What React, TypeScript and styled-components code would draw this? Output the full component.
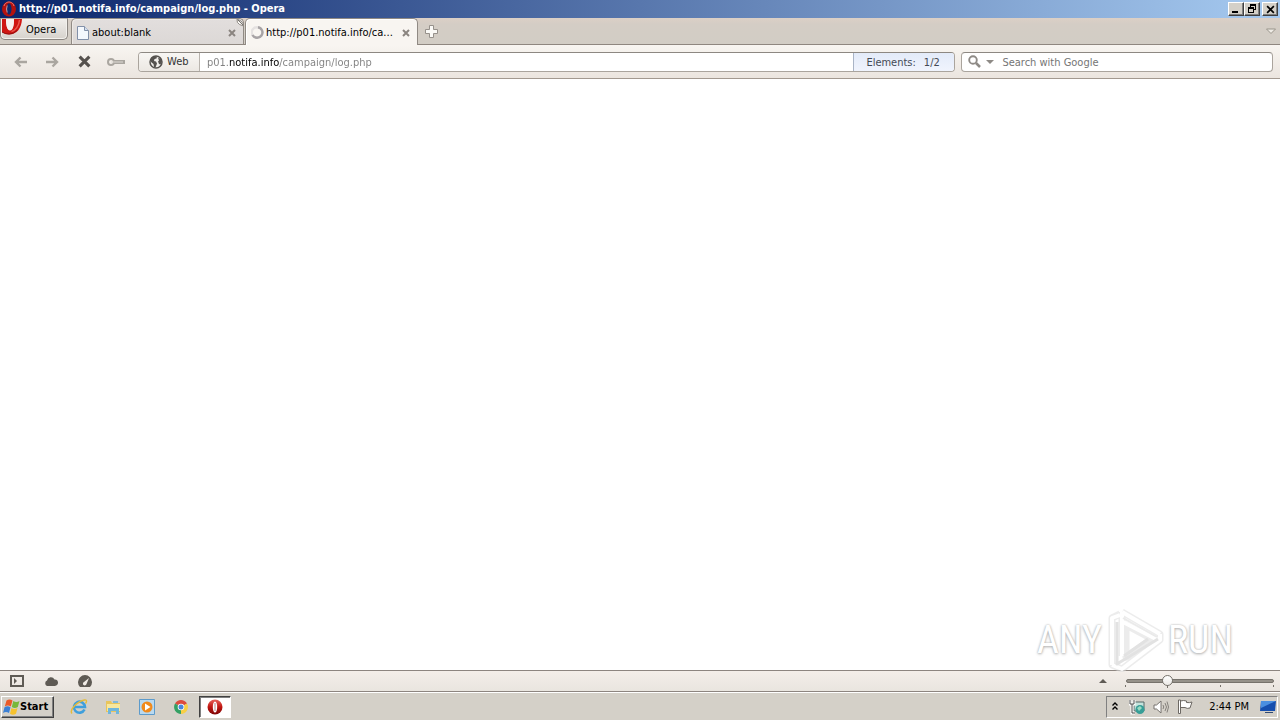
import React from "react";
import styled, { createGlobalStyle, css } from "styled-components";

const Global = createGlobalStyle`
  * { box-sizing: border-box; }
  body { margin: 0; background: #fff; }
  body, button, input {
    font-family: Tahoma, "DejaVu Sans Condensed", "Noto Sans", sans-serif;
    font-size: 11px;
    line-height: 14px;
    color: #000;
  }
  button { padding: 0; border: 0; background: none; }
  svg { display: block; flex: none; }
`;

const Desktop = styled.div`
  display: flex;
  flex-direction: column;
  min-height: 100vh;
`;

const TitleBar = styled.header`
  display: flex;
  align-items: center;
  gap: 2px;
  height: 18px;
  padding: 0 2px 0 1px;
  background: linear-gradient(90deg, #0a246a, #a6caf0);
`;

const Title = styled.h1`
  flex: 1;
  margin: 0;
  font-size: 11px;
  line-height: 18px;
  font-weight: 700;
  color: #fff;
`;

const raised = css`
  border: 1px solid;
  border-color: #fff #404040 #404040 #fff;
  box-shadow: inset -1px -1px 0 #808080;
  background: #d4d0c8;
`;

const WindowButtons = styled.div`
  display: flex;
`;

const WindowButton = styled.button<{ $apart?: boolean }>`
  ${raised}
  display: grid;
  place-items: center;
  width: 16px;
  height: 14px;
  margin-left: ${(p) => (p.$apart ? 2 : 0)}px;
`;

const TabBar = styled.nav`
  display: flex;
  height: 27px;
  padding-right: 4px;
  background: linear-gradient(#dcd0c6, #d4cdc5 6px, #d2cdc5);
  border-bottom: 1px solid #8f8780;
`;

const OperaButton = styled.button`
  display: flex;
  align-items: flex-start;
  gap: 4px;
  width: 68px;
  height: 22px;
  margin-right: 3px;
  padding-left: 1px;
  border: 1px solid #8c8782;
  border-top-color: #b5aea6;
  border-radius: 0 0 5px 5px;
  background: linear-gradient(#f0eeeb, #d6d2cc);
  box-shadow: inset 0 0 0 1px #f3f1ed;
  line-height: 22px;
`;

const Tab = styled.div<{ $active?: boolean }>`
  position: relative;
  display: flex;
  align-items: center;
  width: 173px;
  height: ${(p) => (p.$active ? 27 : 26)}px;
  margin-right: 1px;
  padding: 2px 6px 0 5px;
  border: 1px solid #908a84;
  border-bottom: 0;
  border-radius: 5px 5px 0 0;
  background: ${(p) => (p.$active ? "#f8f5f1" : "linear-gradient(#e2dedd, #dcd8d6)")};
  box-shadow: inset 1px 1px 0 ${(p) => (p.$active ? "#fff" : "#eeeae6")};
`;

const TabLabel = styled.button`
  display: flex;
  flex: 1;
  align-items: center;
  gap: 2px;
  min-width: 0;
  white-space: nowrap;
`;

const TabText = styled.span`
  flex: 1;
  overflow: hidden;
  text-align: left;
`;

const Corner = styled.span`
  position: absolute;
  top: 0;
  right: -1px;
`;

const IconButton = styled.button<{ $width?: number }>`
  display: grid;
  place-items: center;
  width: ${(p) => p.$width ?? 16}px;
`;

const Fill = styled.span`
  flex: 1;
`;

const Toolbar = styled.div`
  display: flex;
  align-items: center;
  gap: 6px;
  height: 34px;
  padding: 0 7px 0 5px;
  border-bottom: 1px solid #a39990;
  background: linear-gradient(#f8f5f1, #ebe5df);
`;

const NavButtons = styled.div`
  display: flex;
  width: 127px;
`;

const Field = styled.div<{ $grow: number }>`
  display: flex;
  align-items: center;
  flex: ${(p) => p.$grow} 1 0;
  min-width: 0;
  height: 20px;
  overflow: hidden;
  border: 1px solid #aaa49d;
  border-top-color: #8d8882;
  border-radius: 4px;
  background: #fff;
`;

const WebBadge = styled.button`
  display: flex;
  align-items: center;
  gap: 4px;
  width: 61px;
  height: 18px;
  padding: 1px 0 0 10px;
  border-right: 1px solid #b9b4ae;
  background: linear-gradient(#f8f6f3, #ece8e3);
  color: #333;
`;

const TextInput = styled.input`
  flex: 1;
  min-width: 0;
  height: 18px;
  padding: 1px 8px 0;
  border: 0;
  outline: 0;
  background: none;
  &::placeholder { color: #757575; opacity: 1; }
`;

const AddressInput = styled(TextInput)`
  padding-left: 7px;
  color: transparent;
  background: linear-gradient(90deg, #808080 29px, #000 29px, #000 79px, #808080 79px);
  background-clip: text;
  -webkit-background-clip: text;
`;

const Progress = styled.span`
  display: flex;
  gap: 8px;
  width: 101px;
  height: 18px;
  padding: 3px 0 0 12px;
  border-left: 1px solid #a9b4c6;
  background: linear-gradient(#e3ebf9, #f0f4fd);
  color: #444a55;
`;

const Page = styled.main`
  position: relative;
  flex: 1;
  background: #fff;
`;

const Watermark = styled.div`
  position: absolute;
  right: 47px;
  bottom: -2px;
  z-index: 1;
  display: flex;
  align-items: center;
  gap: 4px;
  font-family: "Roboto Condensed", Roboto, "Liberation Sans", sans-serif;
  font-size: 38px;
  line-height: 64px;
  color: #fff;
  text-shadow: 0 0 2px #b4b4b4, 0 1px 3px #b4b4b4;
  pointer-events: none;
`;

const StatusBar = styled.footer`
  display: flex;
  align-items: center;
  height: 22px;
  padding: 0 4px 0 8px;
  border-top: 1px solid #8d8580;
  border-bottom: 1px solid #8d8580;
  background: linear-gradient(#f4eee9, #e9e5df);
`;

const StatusButtons = styled.div`
  display: flex;
  gap: 16px;
`;

const ZoomBox = styled.label`
  position: relative;
  width: 152px;
  height: 20px;
`;

const Ticks = styled.svg`
  position: absolute;
  left: 0;
  bottom: 3px;
`;

const ZoomRange = styled.input`
  position: relative;
  appearance: none;
  display: block;
  width: 148px;
  height: 20px;
  margin: 0 2px;
  background: none;
  &::-webkit-slider-runnable-track {
    height: 4px;
    border: 1px solid #77736c;
    border-radius: 2px;
    background: #96928a;
  }
  &::-webkit-slider-thumb {
    appearance: none;
    width: 11px;
    height: 11px;
    margin-top: -5px;
    border: 1px solid #77736c;
    border-radius: 50%;
    background: linear-gradient(#fff, #eceae6);
  }
`;

const TaskBar = styled.footer`
  display: flex;
  align-items: center;
  height: 28px;
  padding: 0 2px 0 1px;
  border-top: 1px solid #fff;
  background: #d4d0c8;
`;

const StartButton = styled.button`
  ${raised}
  display: flex;
  align-items: center;
  width: 53px;
  height: 22px;
  margin-right: 6px;
  padding-left: 1px;
  font-weight: 700;
  white-space: nowrap;
`;

const TaskButton = styled.button<{ $active?: boolean }>`
  display: grid;
  place-items: center;
  width: ${(p) => (p.$active ? 32 : 30)}px;
  height: 22px;
  margin-left: ${(p) => (p.$active ? 3 : 4)}px;
  ${(p) =>
    p.$active &&
    css`
      border: 1px solid;
      border-color: #404040 #fff #fff #404040;
      box-shadow: inset 1px 1px 0 #808080;
      background: #fff;
    `}
`;

const Tray = styled.div`
  display: flex;
  align-items: center;
  height: 22px;
  padding-left: 2px;
  border: 1px solid;
  border-color: #808080 #fff #fff #808080;
`;

const Clock = styled.time`
  padding: 0 10px 0 8px;
  white-space: nowrap;
`;

const OperaLogo = () => (
  <svg width="16" height="16" viewBox="0 0 16 16" aria-hidden="true">
    <defs>
      <linearGradient id="operaRed" x1="0" y1="0" x2="0" y2="1">
        <stop offset="0" stopColor="#e8645c" />
        <stop offset=".5" stopColor="#c01510" />
        <stop offset="1" stopColor="#7c0505" />
      </linearGradient>
    </defs>
    <ellipse cx="8" cy="8" rx="7.5" ry="7.5" fill="url(#operaRed)" />
    <ellipse cx="8" cy="8" rx="2.2" ry="5.5" fill="#fff" />
    <path d="M8 4v8" stroke="#b98a88" />
  </svg>
);

const TitleLogo = () => (
  <svg width="16" height="16" viewBox="0 0 16 16" aria-hidden="true">
    <ellipse cx="8" cy="8" rx="7" ry="7.5" fill="#b3120f" />
    <path d="M3 5C4 1.500 7 1 8 1s4 .5 5 4" fill="none" stroke="#ef7a72" />
    <ellipse cx="8" cy="8" rx="2.500" ry="5.800" fill="#0f2a6c" />
    <path d="M6.200 4.500q-1.300 3.500 0 7" fill="none" stroke="#f2b8b4" strokeWidth=".8" />
  </svg>
);

const MenuLogo = () => (
  <svg width="20" height="16" viewBox="0 0 20 16" aria-hidden="true">
    <path d="M0 0v13q3 2.500 7 2.500C15 15.500 19.500 9 20 0h-8c0 6-1 11-4 11S4 6 4 0z" fill="#cf1713" />
    <path d="M4 0c0 6 1 11.500 4 11.500s4-5.500 4-11.500z" fill="#f6f3f1" />
    <path d="M17.500 1c-.5 6-4 10.500-8 11.500" fill="none" stroke="#ea5a50" strokeWidth="1.500" />
    <path d="M0 13q3 2 7 2 5 0 8.500-4" fill="none" stroke="#921010" />
  </svg>
);

const CloseGlyph = ({ size = 8, color = "#8b8580", weight = 2 }) => (
  <svg width={size} height={size} viewBox="0 0 8 8" aria-hidden="true">
    <path d="M1 1l6 6M7 1L1 7" stroke={color} strokeWidth={weight} />
  </svg>
);

const Arrow = ({ flip = false }) => (
  <svg width="14" height="12" viewBox="0 0 14 12" aria-hidden="true">
    <path
      d={flip ? "M1 6h11M7.500 1.500L12 6l-4.500 4.500" : "M13 6H2M6.500 1.500L2 6l4.500 4.500"}
      fill="none"
      stroke="#aaa6a0"
      strokeWidth="2.400"
    />
  </svg>
);

export default function App() {
  return (
    <Desktop>
      <Global />
      <TitleBar>
        <TitleLogo />
        <Title>http://p01.notifa.info/campaign/log.php - Opera</Title>
        <WindowButtons>
          <WindowButton aria-label="Minimize">
            <svg width="10" height="10" viewBox="0 0 10 10"><path d="M1 7h6v2H1z" /></svg>
          </WindowButton>
          <WindowButton aria-label="Restore">
            <svg width="10" height="10" viewBox="0 0 10 10" shapeRendering="crispEdges">
              <path d="M3 0h6v6H7V5h1V2H4v1H3zM1 3h6v6H1zm1 2v3h4V5z" fillRule="evenodd" />
            </svg>
          </WindowButton>
          <WindowButton aria-label="Close" $apart>
            <CloseGlyph size={9} color="#000" weight={1.5} />
          </WindowButton>
        </WindowButtons>
      </TitleBar>

      <TabBar>
        <OperaButton>
          <MenuLogo />
          Opera
        </OperaButton>
        <Tab>
          <TabLabel>
            <svg width="13" height="14" viewBox="0 0 13 14" aria-hidden="true">
              <path d="M.5.5h7l4 4v9H.5z" fill="#f4f8fd" stroke="#8290a8" />
              <path d="M7.500.5v4h4" fill="#d5e0ef" stroke="#8290a8" />
            </svg>
            <TabText>about:blank</TabText>
          </TabLabel>
          <IconButton aria-label="Close tab" $width={10}>
            <CloseGlyph />
          </IconButton>
          <Corner>
            <svg width="8" height="8" viewBox="0 0 8 8" aria-hidden="true">
              <path d="M1 0q-.5 4 2.500 5.500L7.500 7Q7.500 4 5 2z" fill="#faf8f5" stroke="#8c8782" />
              <path d="M2 1l5 5" stroke="#77736f" />
            </svg>
          </Corner>
        </Tab>
        <Tab $active>
          <TabLabel>
            <svg width="13" height="14" viewBox="0 0 13 14" aria-hidden="true">
              <circle cx="6" cy="6.500" r="5.300" fill="none" stroke="#e4e1e0" strokeWidth="2.400" />
              <path d="M7 1.200A5.300 5.300 0 1 1 1.500 9" fill="none" stroke="#a7a3a5" strokeWidth="2.400" />
            </svg>
            <TabText>http://p01.notifa.info/ca...</TabText>
          </TabLabel>
          <IconButton aria-label="Close tab" $width={10}>
            <CloseGlyph />
          </IconButton>
        </Tab>
        <IconButton aria-label="New tab" $width={25}>
          <svg width="13" height="13" viewBox="0 0 13 13">
            <path d="M4.500.5h4v4h4v4h-4v4h-4v-4h-4v-4h4z" fill="#fbfaf7" stroke="#96918b" />
          </svg>
        </IconButton>
        <Fill />
        <IconButton aria-label="Closed tabs" $width={11}>
          <svg width="10" height="7" viewBox="0 0 10 7">
            <path d="M.5 1h9L5 5.500z" fill="#efece6" stroke="#99948a" />
          </svg>
        </IconButton>
      </TabBar>

      <Toolbar>
        <NavButtons>
          <IconButton aria-label="Back" $width={31}><Arrow /></IconButton>
          <IconButton aria-label="Forward" $width={31}><Arrow flip /></IconButton>
          <IconButton aria-label="Stop" $width={34}>
            <CloseGlyph size={13} color="#55514d" weight={1.9} />
          </IconButton>
          <IconButton aria-label="Passwords" $width={30}>
            <svg width="18" height="10" viewBox="0 0 18 10">
              <circle cx="4" cy="5" r="3" fill="none" stroke="#aaa6a0" strokeWidth="2" />
              <path d="M7 5h11" fill="none" stroke="#aaa6a0" strokeWidth="4" />
              <path d="M4 5h12" stroke="#dedad5" />
            </svg>
          </IconButton>
        </NavButtons>
        <Field $grow={819}>
          <WebBadge>
            <svg width="14" height="14" viewBox="0 0 14 14" aria-hidden="true">
              <circle cx="7" cy="7" r="6" fill="#f1eeea" stroke="#55524f" strokeWidth="1.500" />
              <path d="M2 3l3-2 3 .5-.5 2-2 .5-.5 2 2 .5 1 2-1.500 4L5 12 4.500 9 2 7zM9 3l3 .5 1 3-1.500 3L10 9 9 6.500l1-1z" fill="#55524f" />
            </svg>
            Web
          </WebBadge>
          <AddressInput aria-label="Address" defaultValue="p01.notifa.info/campaign/log.php" />
          <Progress>
            <span>Elements:</span>
            <span>1/2</span>
          </Progress>
        </Field>
        <Field $grow={311}>
          <IconButton aria-label="Search" $width={24}>
            <svg width="13" height="13" viewBox="0 0 13 13">
              <circle cx="5" cy="5" r="3.800" fill="none" stroke="#8e8a86" strokeWidth="1.900" />
              <path d="M8 8l4 4" stroke="#8e8a86" strokeWidth="2.500" />
            </svg>
          </IconButton>
          <IconButton aria-label="Choose search engine" $width={8}>
            <svg width="8" height="4" viewBox="0 0 8 4"><path d="M0 0h8L4 4z" fill="#8e8a86" /></svg>
          </IconButton>
          <TextInput aria-label="Search" placeholder="Search with Google" />
        </Field>
      </Toolbar>

      <Page>
        <Watermark>
          <span>ANY</span>
          <svg width="58" height="64" viewBox="0 0 58 64" aria-hidden="true">
            <g fill="none" strokeLinejoin="round">
              <path d="M16 4v44M16 4l38 22v6L16 61l-10-4V10l8-4M20 17l26 14-26 18z" stroke="#dcdcdc" strokeWidth="7" opacity=".55" />
              <path d="M16 4v44M16 4l38 22M17 14l35 18M6 57V10l8-3M6 57l10 4 38-29v-6" stroke="#fff" strokeWidth="4" />
              <path d="M11 14v42L52 31M18 48l24-17" stroke="#e2e2e2" strokeWidth="3" />
              <path d="M17 10l34 19" stroke="#eaeaea" strokeWidth="2" />
            </g>
          </svg>
          <span>RUN</span>
        </Watermark>
      </Page>

      <StatusBar>
        <StatusButtons>
          <IconButton aria-label="Panels" $width={18}>
            <svg width="14" height="12" viewBox="0 0 14 12">
              <path d="M1 1h12v10H1z" fill="none" stroke="#5f5b55" strokeWidth="2" />
              <path d="M4 3l3 3-3 3z" fill="#5f5b55" />
            </svg>
          </IconButton>
          <IconButton aria-label="Opera Link" $width={18}>
            <svg width="14" height="10" viewBox="0 0 14 10">
              <path d="M3 10a3 3 0 0 1 0-5.500A4 4 0 0 1 10.500 3.500 3.200 3.200 0 0 1 11 10z" fill="#5f5b55" />
            </svg>
          </IconButton>
          <IconButton aria-label="Opera Turbo" $width={18}>
            <svg width="14" height="12" viewBox="0 0 14 12">
              <path d="M2 12a7 7 0 1 1 10 0z" fill="#5f5b55" />
              <path d="M11 3L8.500 9a1.800 1.800 0 1 1-2.500-2z" fill="#f1ece7" />
            </svg>
          </IconButton>
        </StatusButtons>
        <Fill />
        <IconButton aria-label="Zoom menu" $width={42}>
          <svg width="8" height="4" viewBox="0 0 8 4"><path d="M0 4h8L4 0z" fill="#5f5b55" /></svg>
        </IconButton>
        <ZoomBox>
          <Ticks width="152" height="4" viewBox="0 0 152 4" aria-hidden="true">
            <path d="M1.500 1v2M43.500 1v3M96.500 1v2M149.500 1v2" stroke="#77736c" />
          </Ticks>
          <ZoomRange type="range" aria-label="Zoom" min={0} max={100} defaultValue={26} />
        </ZoomBox>
      </StatusBar>

      <TaskBar>
        <StartButton>
          <svg width="17" height="16" viewBox="0 0 17 16" aria-hidden="true">
            <path d="M3.500 1.500q3-2 6 0L7.800 7.500q-3-2-6 0z" fill="#ea5a28" />
            <path d="M10.300 2q3 2 6.200 0L14.800 8q-3 2-6 0z" fill="#78b83a" />
            <path d="M1.500 8.300q3-2 6 0L6 14q-3-2-6 0z" fill="#3c80d4" />
            <path d="M8.500 9q3 2 6 0L13 14.700q-3 2-6 0z" fill="#f6c22d" />
          </svg>
          Start
        </StartButton>
        <TaskButton aria-label="Internet Explorer">
          <svg width="18" height="16" viewBox="0 0 18 16">
            <path d="M14.500 10.500A5.500 5.500 0 1 1 15 8H5" fill="none" stroke="#3f9fdc" strokeWidth="2.600" />
            <path d="M2 14.500C-1 11 7 2.500 14.500 1 17 .5 17 2.500 15.500 4.500" fill="none" stroke="#e5bb38" strokeWidth="1.400" />
          </svg>
        </TaskButton>
        <TaskButton aria-label="Windows Explorer">
          <svg width="16" height="16" viewBox="0 0 16 16">
            <path d="M1 2h5l1 2h8v9H1z" fill="#e8c55c" />
            <path d="M2 5h13v7H2z" fill="#f8e79d" />
            <path d="M8 2h5v2H8z" fill="#82b9db" />
            <path d="M3 15V9h11v6h-3v-3H6v3z" fill="#70b6dc" />
          </svg>
        </TaskButton>
        <TaskButton aria-label="Media Player">
          <svg width="16" height="16" viewBox="0 0 16 16">
            <path d="M.5.500h15v15H.5z" fill="#b9d9f0" stroke="#5d9bcb" />
            <circle cx="8" cy="8" r="5.500" fill="#f08a1c" />
            <path d="M6 4.500L11.500 8 6 11.500z" fill="#fff" />
          </svg>
        </TaskButton>
        <TaskButton aria-label="Chrome">
          <svg width="14" height="14" viewBox="0 0 14 14">
            <path d="M7 7L1 3.500A7 7 0 0 1 13 3.500z" fill="#dd4b3e" />
            <path d="M7 7l6-3.500A7 7 0 0 1 7 14z" fill="#f8cf45" />
            <path d="M7 7v7A7 7 0 0 1 1 3.500z" fill="#34a064" />
            <circle cx="7" cy="7" r="3.300" fill="#fff" />
            <circle cx="7" cy="7" r="2.500" fill="#4a86dd" />
          </svg>
        </TaskButton>
        <TaskButton aria-label="Opera" $active>
          <OperaLogo />
        </TaskButton>
        <Fill />
        <Tray>
          <IconButton aria-label="Show hidden icons" $width={12}>
            <svg width="6" height="9" viewBox="0 0 6 9">
              <path d="M.5 3.500L3 1l2.500 2.500M.5 7.500L3 5l2.500 2.500" fill="none" stroke="#000" strokeWidth="1.400" />
            </svg>
          </IconButton>
          <IconButton aria-label="Network" $width={32}>
            <svg width="16" height="16" viewBox="0 0 16 16">
              <path d="M5 3h10v9H5z" fill="#c5e3dd" stroke="#576968" />
              <path d="M1 1v4h4V1M3 5v9h3" fill="none" stroke="#fff" strokeWidth="3" />
              <path d="M1 1v4h4V1M3 5v9h3" fill="none" stroke="#4d4d4d" />
              <circle cx="11" cy="10.500" r="4.500" fill="#379e97" />
              <path d="M8 9l3-2 2 2-3 3z" fill="#9adbc4" />
            </svg>
          </IconButton>
          <IconButton aria-label="Volume" $width={16}>
            <svg width="16" height="14" viewBox="0 0 16 14">
              <path d="M1 5h2.500L8 1v12L3.500 9H1z" fill="#fff" stroke="#77736e" />
              <path d="M10 5q1.500 2 0 4M12 3q3 4 0 8M14 1.500q3 5.500 0 11" fill="none" stroke="#85817c" />
            </svg>
          </IconButton>
          <IconButton aria-label="Action Center" $width={32}>
            <svg width="16" height="15" viewBox="0 0 16 15">
              <path d="M1.500 1v13.500h2V1zM3.500 2q3-1 6 0v1.500q3 .5 5.500-.5l-2 6q-3 1-5-.500H3.500z" fill="#fff" stroke="#6d6964" />
            </svg>
          </IconButton>
          <Clock>2:44 PM</Clock>
          <IconButton aria-label="Display" $width={18}>
            <svg width="16" height="14" viewBox="0 0 16 14">
              <path d="M1 1h15l-1 10H0z" fill="#164fae" />
              <path d="M1 1h15L1 8z" fill="#4b8fe0" />
              <path d="M5 12h8v1H5z" fill="#304a73" />
            </svg>
          </IconButton>
        </Tray>
      </TaskBar>
    </Desktop>
  );
}
